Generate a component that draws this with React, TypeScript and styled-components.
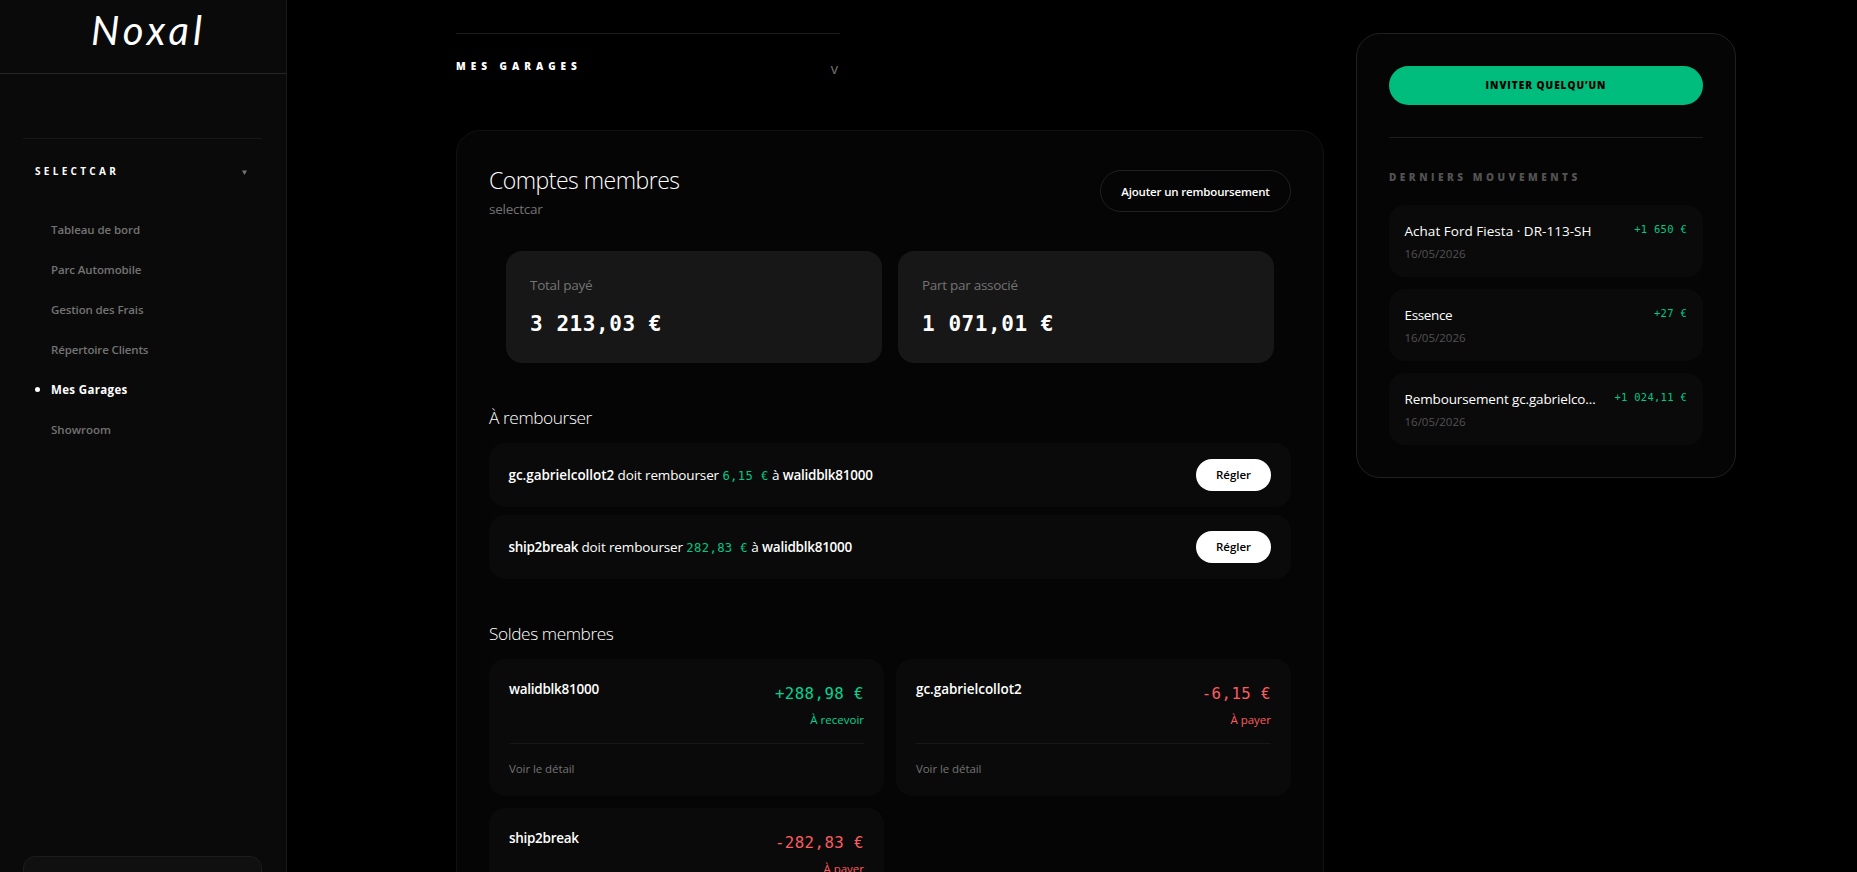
import React from 'react';
import styled, { createGlobalStyle } from 'styled-components';

const GlobalStyle = createGlobalStyle`
  *, *::before, *::after { box-sizing: border-box; }
  html, body { margin: 0; background: #000; }
  body { height: 100vh; overflow: hidden; }
`;

const Shell = styled.div`
  display: flex;
  height: 100vh;
  overflow: hidden;
  background: #000;
  color: #fff;
  font-family: 'Open Sans', 'Noto Sans', sans-serif;
  font-size: 13.5px;
  line-height: 20px;
`;

/* Text run with its own tracking */
const T = styled.span<{ $ls?: number }>`
  letter-spacing: ${(p) => p.$ls ?? 0}px;
  white-space: nowrap;
`;

const Sidebar = styled.aside`
  flex: 0 0 287px;
  display: flex;
  flex-direction: column;
  background: #0a0a0a;
  border-right: 1px solid #191919;
`;

const Brand = styled.div`
  flex: 0 0 74px;
  display: flex;
  justify-content: center;
  padding: 5px 0 0 11px;
  border-bottom: 1px solid #262626;
`;

const Logo = styled.span`
  font-family: 'Segoe Script', Lato, sans-serif;
  font-style: italic;
  font-weight: 400;
  font-size: 40px;
  line-height: 50px;
  letter-spacing: 4px;
`;

const Nav = styled.nav`
  flex: 1;
  margin: 64px 24px 0 23px;
  border-top: 1px solid #171717;
`;

const NavHead = styled.div`
  display: flex;
  align-items: center;
  justify-content: space-between;
  height: 20px;
  margin: 22px 15px 29px 12px;
  font-size: 10px;
  font-weight: 700;
`;

const Caret = styled.svg`
  width: 5px;
  height: 5px;
  margin-top: 2px;
  fill: #737373;
`;

const NavItem = styled.div<{ $active?: boolean }>`
  display: flex;
  align-items: center;
  gap: 11px;
  height: 40px;
  padding-left: 11px;
  font-size: 11.5px;
  font-weight: ${(p) => (p.$active ? 700 : 600)};
  color: ${(p) => (p.$active ? '#fff' : '#737373')};
  &::before {
    content: '';
    width: 5px;
    height: 5px;
    margin: 0 0 1px 1px;
    border-radius: 50%;
    background: ${(p) => (p.$active ? '#fff' : 'transparent')};
  }
`;

const UserCard = styled.div`
  flex: 0 0 60px;
  margin: 0 24px -44px 23px;
  border: 1px solid #1c1c1c;
  border-radius: 12px;
  background: #101010;
`;

const Main = styled.main`
  flex: 1;
  display: flex;
  align-items: flex-start;
  gap: 32px;
  padding: 33px 0 0 169px;
`;

const Content = styled.div`
  width: 868px;
`;

const Section = styled.div`
  display: flex;
  justify-content: space-between;
  width: 384px;
  height: 97px;
  padding-top: 22px;
  border-top: 1px solid #1d1d1d;
  font-size: 10px;
  font-weight: 800;
`;

const SectionCaret = styled.span`
  padding: 3px 2px 0 0;
  font-size: 14.5px;
  font-weight: 400;
  color: #737373;
`;

const Panel = styled.section`
  height: 900px;
  padding: 32px;
  border: 1px solid #111;
  border-radius: 24px;
  background: #050505;
`;

const PanelHead = styled.header`
  display: flex;
  align-items: center;
  justify-content: space-between;
  margin-bottom: 32px;
`;

const Title = styled.h1`
  margin: 0 0 3px;
  padding-top: 1px;
  font-size: 23px;
  font-weight: 300;
  line-height: 32px;
`;

const Muted = styled.div`
  color: #737373;
`;

const GhostButton = styled.button`
  width: 191px;
  height: 42px;
  padding: 1px 0 0;
  border: 1px solid #202020;
  border-radius: 21px;
  background: transparent;
  color: #fff;
  font: 600 11.5px/16px 'Open Sans', sans-serif;
`;

const Stats = styled.div`
  display: grid;
  grid-template-columns: 1fr 1fr;
  gap: 16px;
  padding: 0 17px;
`;

const Stat = styled.div`
  height: 112px;
  padding: 24px;
  border-radius: 16px;
  background: #171717;
`;

const Money = styled.span<{ $size: number; $color?: string; $bold?: boolean }>`
  font-family: 'DejaVu Sans Mono', monospace;
  font-size: ${(p) => p.$size * 0.875}px;
  letter-spacing: ${(p) => p.$size * 0.0233}px;
  font-weight: ${(p) => (p.$bold ? 700 : 400)};
  color: ${(p) => p.$color ?? '#fff'};
  white-space: pre;
`;

const StatValue = styled.div`
  margin-top: 13px;
  line-height: 32px;
`;

const Heading = styled.h2`
  margin: 40px 0 11px;
  padding-top: 1px;
  font-size: 17.3px;
  font-weight: 300;
  line-height: 28px;
`;

const Debts = styled.div`
  display: grid;
  gap: 8px;
`;

const Debt = styled.div`
  display: flex;
  align-items: center;
  justify-content: space-between;
  height: 64px;
  padding: 0 20px 0 19.5px;
  border-radius: 16px;
  background: #0a0a0a;
`;

const Strong = styled(T)`
  font-weight: 600;
`;

const PayButton = styled.button`
  width: 75px;
  height: 32px;
  padding: 0;
  border: 0;
  border-radius: 16px;
  background: #fff;
  color: #000;
  font: 600 11.5px/16px 'Open Sans', sans-serif;
`;

const Balances = styled.div`
  display: grid;
  grid-template-columns: 1fr 1fr;
  gap: 12px;
`;

const Balance = styled.article`
  height: 137px;
  padding: 20px;
  border-radius: 16px;
  background: #0a0a0a;
`;

const BalanceTop = styled.div`
  display: flex;
  justify-content: space-between;
  height: 64px;
`;

const BalanceSum = styled.div<{ $color: string }>`
  display: flex;
  flex-direction: column;
  align-items: flex-end;
  gap: 4px;
  padding-top: 1px;
  font-size: 11.5px;
  line-height: 16px;
  color: ${(p) => p.$color};
  & > ${Money} { line-height: 28px; }
`;

const Details = styled.div`
  padding-top: 17px;
  border-top: 1px solid #171717;
  font-size: 11.5px;
  line-height: 16px;
  color: #737373;
`;

const Side = styled.aside`
  width: 380px;
  height: 445px;
  padding: 32px;
  border: 1px solid #202020;
  border-radius: 24px;
  background: #050505;
`;

const InviteButton = styled.button`
  width: 100%;
  height: 39px;
  padding: 0;
  border: 0;
  border-radius: 20px;
  background: #00bc7d;
  color: #000;
  font: 800 10px/15px 'Open Sans', sans-serif;
`;

const SideLabel = styled.div`
  margin: 32px 0 21px;
  padding-top: 31px;
  border-top: 1px solid #1d1d1d;
  height: 47px;
  font-size: 10px;
  font-weight: 800;
  line-height: 16px;
  color: #525252;
`;

const Movement = styled.div`
  display: flex;
  justify-content: space-between;
  height: 72px;
  margin-bottom: 12px;
  padding: 16px 16px 16px 15.5px;
  border-radius: 16px;
  background: #0a0a0a;
  & > ${Money} { line-height: 16px; }
`;

const MoveDate = styled.div`
  margin-top: 5px;
  font-size: 11.5px;
  line-height: 16px;
  color: #525252;
`;

const GREEN = '#00d492';
const EMERALD = '#00c884';
const RED = '#fb5c60';

const NAV: [string, number][] = [
  ['Tableau de bord', -0.08],
  ['Parc Automobile', -0.12],
  ['Gestion des Frais', -0.13],
  ['Répertoire Clients', -0.14],
  ['Mes Garages', 0.35],
  ['Showroom', 0],
];

const TRACKING: Record<string, number> = {
  'gc.gabrielcollot2': -0.05,
  ship2break: -0.3,
  walidblk81000: -0.26,
};

const DEBTS = [
  { from: 'gc.gabrielcollot2', to: 'walidblk81000', amount: '6,15 €' },
  { from: 'ship2break', to: 'walidblk81000', amount: '282,83 €' },
];

const BALANCES = [
  { name: 'walidblk81000', amount: '+288,98 €', credit: true },
  { name: 'gc.gabrielcollot2', amount: '-6,15 €', credit: false },
  { name: 'ship2break', amount: '-282,83 €', credit: false },
];

const MOVES: [string, string, number][] = [
  ['Achat Ford Fiesta · DR-113-SH', '+1 650 €', 0.03],
  ['Essence', '+27 €', -0.35],
  ['Remboursement gc.gabrielco…', '+1 024,11 €', -0.13],
];

const Member = ({ name }: { name: string }) => <Strong $ls={TRACKING[name]}>{name}</Strong>;

export default function App() {
  return (
    <Shell>
      <GlobalStyle />
      <Sidebar>
        <Brand><Logo>Noxal</Logo></Brand>
        <Nav>
          <NavHead>
            <T $ls={3.3}>SELECTCAR</T>
            <Caret viewBox="0 0 5 5"><path d="M0 .5h5L2.5 5z" /></Caret>
          </NavHead>
          {NAV.map(([label, ls]) => (
            <NavItem key={label} $active={label === 'Mes Garages'}><T $ls={ls}>{label}</T></NavItem>
          ))}
        </Nav>
        <UserCard />
      </Sidebar>
      <Main>
        <Content>
          <Section>
            <T $ls={5}>MES GARAGES</T>
            <SectionCaret>v</SectionCaret>
          </Section>
          <Panel>
            <PanelHead>
              <div>
                <Title><T $ls={-0.5}>Comptes membres</T></Title>
                <Muted><T $ls={-0.25}>selectcar</T></Muted>
              </div>
              <GhostButton><T $ls={-0.17}>Ajouter un remboursement</T></GhostButton>
            </PanelHead>
            <Stats>
              <Stat>
                <Muted><T $ls={-0.25}>Total payé</T></Muted>
                <StatValue><Money $size={24} $bold>3 213,03 €</Money></StatValue>
              </Stat>
              <Stat>
                <Muted><T $ls={-0.28}>Part par associé</T></Muted>
                <StatValue><Money $size={24} $bold>1 071,01 €</Money></StatValue>
              </Stat>
            </Stats>
            <Heading><T $ls={-0.42}>À rembourser</T></Heading>
            <Debts>
              {DEBTS.map((d) => (
                <Debt key={d.from}>
                  <T $ls={-0.13}>
                    <Member name={d.from} /> doit rembourser <Money $size={14} $color={EMERALD}>{d.amount}</Money> à <Member name={d.to} />
                  </T>
                  <PayButton>Régler</PayButton>
                </Debt>
              ))}
            </Debts>
            <Heading><T $ls={-0.42}>Soldes membres</T></Heading>
            <Balances>
              {BALANCES.map((b) => (
                <Balance key={b.name}>
                  <BalanceTop>
                    <Member name={b.name} />
                    <BalanceSum $color={b.credit ? GREEN : RED}>
                      <Money $size={18} $color={b.credit ? GREEN : RED}>{b.amount}</Money>
                      <T>{b.credit ? 'À recevoir' : 'À payer'}</T>
                    </BalanceSum>
                  </BalanceTop>
                  <Details><T $ls={-0.08}>Voir le détail</T></Details>
                </Balance>
              ))}
            </Balances>
          </Panel>
        </Content>
        <Side>
          <InviteButton><T $ls={1}>INVITER QUELQU’UN</T></InviteButton>
          <SideLabel><T $ls={3.52}>DERNIERS MOUVEMENTS</T></SideLabel>
          {MOVES.map(([label, amount, ls]) => (
            <Movement key={label}>
              <div>
                <T $ls={ls}>{label}</T>
                <MoveDate><T>16/05/2026</T></MoveDate>
              </div>
              <Money $size={12} $color={EMERALD}>{amount}</Money>
            </Movement>
          ))}
        </Side>
      </Main>
    </Shell>
  );
}
